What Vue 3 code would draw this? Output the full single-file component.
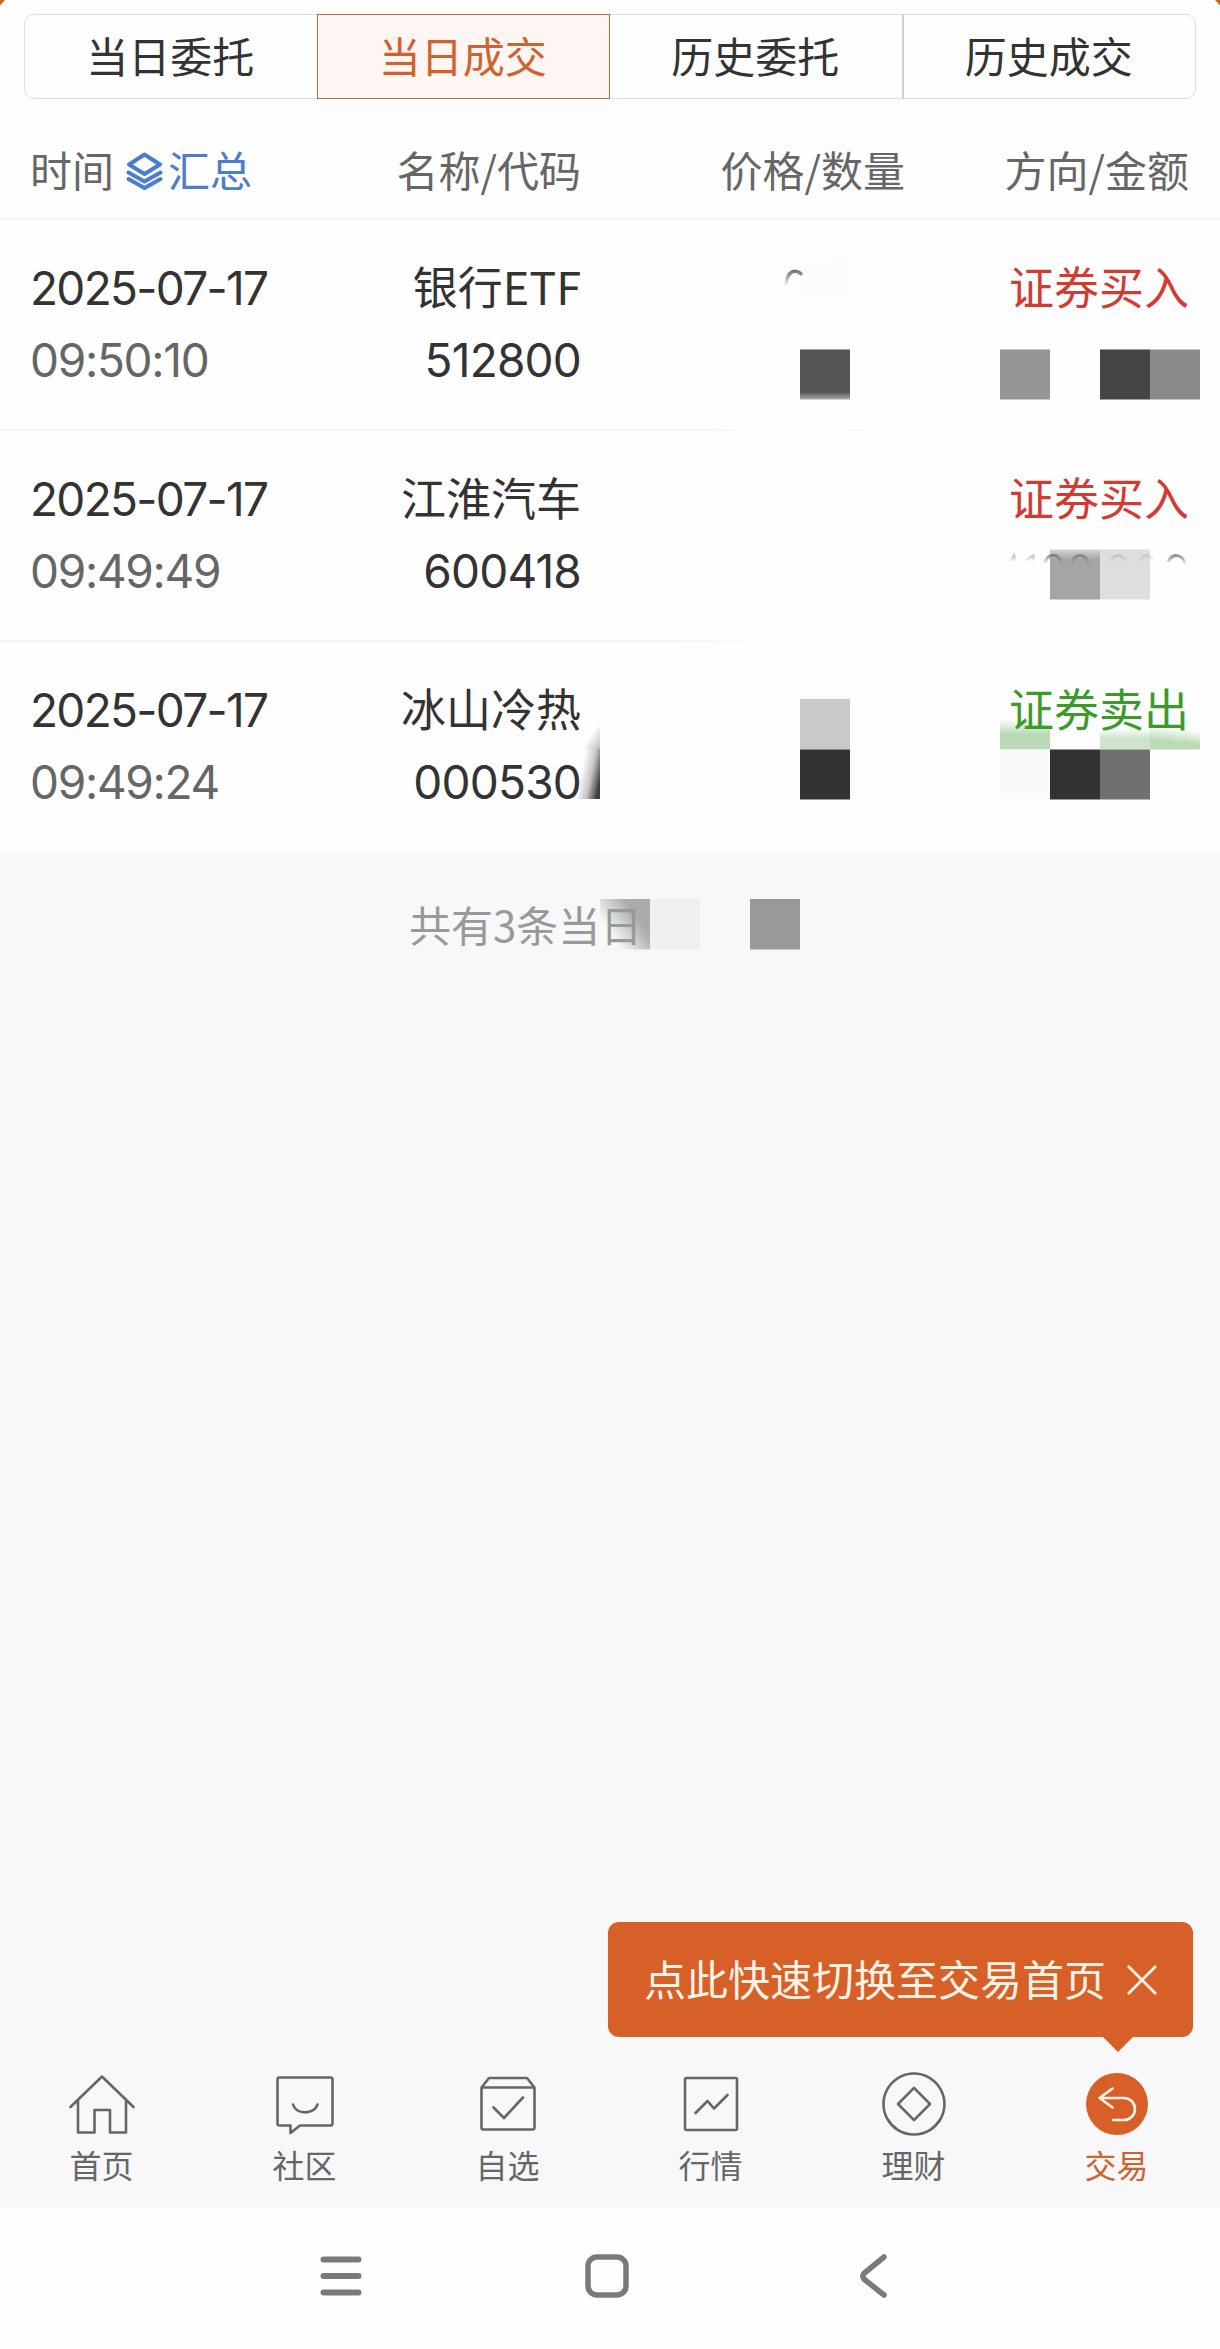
<template>
  <div class="page">
    <header class="top">
      <svg class="corners" viewBox="0 0 1220 6" width="1220" height="6">
        <path d="M0 0H5Q2 3 0 5.500Z M1220 0H1215Q1218 3 1220 5.500Z" fill="#d4602c" />
      </svg>
      <nav class="tabs">
        <button
          v-for="tab in tabs"
          :key="tab"
          class="tab"
          :class="{ active: tab === activeTab }"
          @click="activeTab = tab"
        >
          {{ tab }}
        </button>
      </nav>
    </header>

    <div class="columns head">
      <div class="time-head">
        <span>时间</span>
        <a class="summary-link">
          <svg width="37" height="38" viewBox="0 0 37 38">
            <g fill="none" stroke="#4a7dd0" stroke-width="4" stroke-linejoin="round" stroke-linecap="round">
              <path d="M18.500 2.500L34 12.500L18.500 22L3 12.500Z" />
              <path d="M2.500 20.500L18.500 29.500L34.500 20.500" />
              <path d="M2.500 27L18.500 36L34.500 27" />
            </g>
          </svg>
          <span>汇总</span>
        </a>
      </div>
      <span>名称/代码</span>
      <span>价格/数量</span>
      <span>方向/金额</span>
    </div>

    <section class="list">
      <!-- Maskerade belopp -->
      <svg class="mosaic" width="1220" height="631" viewBox="0 220 1220 631">
        <defs>
          <linearGradient id="fadeDown" x1="0" y1="0" x2="0" y2="1">
            <stop offset="0" stop-color="#777" />
            <stop offset="0.850" stop-color="#777" stop-opacity="0" />
          </linearGradient>
          <linearGradient id="darkEnd" x1="0" y1="0" x2="0" y2="1">
            <stop offset="0.850" stop-color="#555" />
            <stop offset="1" stop-color="#aaa" />
          </linearGradient>
          <linearGradient id="midTop" x1="0" y1="0" x2="0" y2="1">
            <stop offset="0" stop-color="#d4d4d4" />
            <stop offset="0.200" stop-color="#a5a5a5" />
          </linearGradient>
          <linearGradient id="wedge" x1="0.250" y1="0.350" x2="1" y2="0.650">
            <stop offset="0.100" stop-color="#444" stop-opacity="0" />
            <stop offset="0.550" stop-color="#444" stop-opacity="0.300" />
            <stop offset="1" stop-color="#333" stop-opacity="0.950" />
          </linearGradient>
          <linearGradient id="wedgeTop" x1="0" y1="0" x2="1" y2="1">
            <stop offset="0.500" stop-color="#777" stop-opacity="0" />
            <stop offset="1" stop-color="#777" stop-opacity="0.500" />
          </linearGradient>
          <linearGradient id="green" x1="0" y1="0" x2="0" y2="1">
            <stop offset="0" stop-color="#b9dab5" stop-opacity="0" />
            <stop offset="0.500" stop-color="#b9dab5" />
          </linearGradient>
          <linearGradient id="greenEnd" x1="0.550" y1="0" x2="0.350" y2="0.800">
            <stop offset="0" stop-color="#b9dab5" stop-opacity="0" />
            <stop offset="0.800" stop-color="#b9dab5" />
          </linearGradient>
        </defs>
        <path d="M800 268Q820 258 850 256V300H800Z" fill="#fcfcfc" />
        <path d="M786 289C786 268 797 269 802 275" fill="none" stroke="url(#fadeDown)" stroke-width="3.500" />
        <rect x="800" y="349.500" width="50" height="50" fill="url(#darkEnd)" />
        <rect x="1000" y="349.500" width="50" height="50" fill="#969696" />
        <rect x="1100" y="349.500" width="50" height="50" fill="#444" />
        <rect x="1150" y="349.500" width="50" height="50" fill="#8a8a8a" />

        <rect x="1050" y="549.500" width="50" height="50" fill="url(#midTop)" />
        <rect x="1100" y="549.500" width="50" height="50" fill="#dedede" />
        <g fill="none" stroke="url(#fadeDown)" stroke-width="3">
          <path d="M1009 563L1014 556L1016 563" opacity="0.400" />
          <path d="M1025 561L1033 556L1034 563" opacity="0.400" />
          <path d="M1044 566C1047 552 1058 552 1062 564" opacity="0.800" />
          <path d="M1071 566C1074 552 1086 552 1089 566" opacity="0.800" />
          <path d="M1110 564C1113 553 1123 553 1126 564" opacity="0.250" />
          <path d="M1139 564C1142 553 1151 553 1154 564" opacity="0.200" />
          <path d="M1168 562C1173 552 1184 554 1186 567" opacity="0.800" />
        </g>

        <rect x="800" y="699" width="50" height="50.500" fill="#c9c9c9" />
        <rect x="800" y="749.500" width="50" height="50" fill="#323232" />
        <rect x="582" y="722" width="18" height="27" fill="url(#wedgeTop)" />
        <rect x="573" y="749" width="27" height="50" fill="url(#wedge)" />
        <rect x="1000" y="719" width="50" height="30.500" fill="url(#green)" />
        <rect x="1100" y="728" width="50" height="21.500" fill="url(#green)" opacity="0.700" />
        <rect x="1150" y="728" width="50" height="21.500" fill="url(#greenEnd)" />
        <rect x="1000" y="749.500" width="50" height="50" fill="#fafafa" />
        <rect x="1050" y="749.500" width="50" height="50" fill="#323232" />
        <rect x="1100" y="749.500" width="50" height="50" fill="#707070" />
      </svg>

      <div v-for="(deal, i) in deals" :key="deal.code" class="columns row" :class="'row-' + i">
        <div class="cell left">
          <span class="num date">{{ deal.date }}</span>
          <span class="num time">{{ deal.time }}</span>
        </div>
        <div class="cell">
          <span class="cjk">{{ deal.name }}</span>
          <span class="num">{{ deal.code }}</span>
        </div>
        <div class="cell"></div>
        <div class="cell">
          <span class="cjk" :class="deal.side">{{ deal.side === 'buy' ? '证券买入' : '证券卖出' }}</span>
        </div>
      </div>
    </section>

    <section class="footer-note">
      <svg class="mosaic" width="1220" height="60" viewBox="0 894 1220 60">
        <defs>
          <linearGradient id="corner" x1="0" y1="0.650" x2="0.800" y2="0.100">
            <stop offset="0.150" stop-color="#a9acab" stop-opacity="0" />
            <stop offset="0.800" stop-color="#a9acab" />
          </linearGradient>
        </defs>
        <rect x="600" y="899" width="50" height="50.500" fill="url(#corner)" />
        <rect x="650" y="899" width="50" height="50.500" fill="#eff0f2" />
        <rect x="750" y="899" width="50" height="50.500" fill="#999" />
      </svg>
      <span class="note">共有3条当日</span>
    </section>

    <footer class="bottom">
      <div v-if="showTip" class="tip">
        <span>点此快速切换至交易首页</span>
        <svg width="32" height="32" viewBox="0 0 32 32" @click="showTip = false">
          <path d="M2 2L30 30M30 2L2 30" fill="none" stroke="#fff3e6" stroke-width="2.800" />
        </svg>
      </div>
      <div v-for="item in menu" :key="item.label" class="menu-item" :class="{ current: item.current }">
        <svg width="72" height="72" viewBox="0 0 72 72">
          <circle v-if="item.current" cx="36" cy="35" r="31" fill="#d75f28" />
          <path :d="item.icon" />
        </svg>
        <span>{{ item.label }}</span>
      </div>
    </footer>

    <div class="system-nav">
      <svg width="48" height="48" viewBox="0 0 48 48">
        <path d="M6.500 7.500H41.500M6.500 24H41.500M6.500 40.500H41.500" stroke-width="6" />
      </svg>
      <svg width="48" height="48" viewBox="0 0 48 48">
        <rect x="5" y="5" width="38" height="38" rx="9" stroke-width="5.500" />
      </svg>
      <svg width="48" height="48" viewBox="0 0 48 48">
        <path d="M35 5L15.500 21Q12 24 15.500 27.500L35 43" stroke-width="5.500" />
      </svg>
    </div>
  </div>
</template>

<script setup>
import { ref } from 'vue'

const tabs = ['当日委托', '当日成交', '历史委托', '历史成交']
const activeTab = ref('当日成交')
const showTip = ref(true)

const deals = [
  { date: '2025-07-17', time: '09:50:10', name: '银行ETF', code: '512800', side: 'buy' },
  { date: '2025-07-17', time: '09:49:49', name: '江淮汽车', code: '600418', side: 'buy' },
  { date: '2025-07-17', time: '09:49:24', name: '冰山冷热', code: '000530', side: 'sell' },
]

const menu = [
  {
    label: '首页',
    icon: 'M4.500 38L36 7.500L67.500 38M12 31V63.500H28.500V41H44V63.500H60V31',
  },
  {
    label: '社区',
    icon: 'M10.500 8.500H61.500Q63.500 8.500 63.500 10.500V54.500Q63.500 56.500 61.500 56.500H31L21.500 64V56.500H10.500Q8.500 56.500 8.500 54.500V10.500Q8.500 8.500 10.500 8.500M24 35.500C27 46 45 46 48.500 35.500',
  },
  {
    label: '自选',
    icon: 'M9.500 18.500L17 9H55L62.500 18.500V58.500Q62.500 60.500 60.500 60.500H11.500Q9.500 60.500 9.500 58.500V18.500H62.500M21.500 38.500L32 49L51 28.500',
  },
  {
    label: '行情',
    icon: 'M11.500 9H60.500Q62 9 62 10.500V59.500Q62 61 60.500 61H11.500Q10 61 10 59.500V10.500Q10 9 11.500 9M20.500 44L32.500 32L39 39.500L52.500 26',
  },
  {
    label: '理财',
    icon: 'M36 4.500A30.500 30.500 0 1 1 35.900 4.500M36 18.800L52 35L36 51.200L20 35Z',
  },
  {
    label: '交易',
    current: true,
    icon: 'M31.500 19.500L18.500 29L31.500 38.500M18.500 29H43A11 11 0 0 1 43 51H32',
  },
]
</script>

<style>
body {
  margin: 0;
}
</style>

<style scoped>
.page {
  width: 1220px;
  height: 2349px;
  display: flex;
  flex-direction: column;
  background: #f6f8fa;
  font-family: 'Noto Sans CJK SC', sans-serif;
  font-weight: 400;
  font-size: 42px;
  color: #333;
}

.top {
  position: relative;
  height: 121px;
  box-sizing: border-box;
  padding: 14px 24px 0;
  background: #fefefe;
}
.corners {
  position: absolute;
  top: 0;
  left: 0;
}

.tabs {
  display: flex;
  height: 85px;
  box-sizing: border-box;
  border: 1.500px solid #dcdfe0;
  border-radius: 10px;
}
.tab {
  flex: 1;
  margin: -1px 0;
  padding: 0 1px 4px 0;
  border: 0 solid #cfd1d3;
  background: none;
  font: inherit;
  color: inherit;
}
.tab:last-child {
  border-left-width: 2px;
}
.tab.active {
  border: 1.500px solid #b3703f;
  background: #fff6f3;
  color: #cf632d;
}

.columns {
  display: grid;
  grid-template-columns: 1fr 309px 324px 284px;
  padding: 0 31px 0 30px;
  box-sizing: border-box;
  text-align: right;
}
.head {
  height: 99px;
  padding-bottom: 4px;
  align-items: center;
  border-top: 2px solid #fafafa;
  border-bottom: 2px solid #f4f4f4;
  background: #fefefe;
  color: #666;
}
.time-head,
.summary-link {
  display: flex;
  align-items: center;
}
.summary-link {
  margin-left: 12px;
  gap: 5px;
  color: #4a7dd0;
}
.summary-link svg {
  margin-top: 4px;
}

.list {
  position: relative;
  height: 631px;
  background: #fefefe;
}
.mosaic {
  position: absolute;
  top: 0;
  left: 0;
}
.row {
  position: relative;
  height: 211px;
  padding-top: 32px;
  font-size: 45px;
  background: linear-gradient(90deg, #f4f4f4 56%, #fefefe 64%, #f9f9f9 70%, #fefefe 75%) bottom / 100% 2px no-repeat;
}
.row-1 {
  background-image: linear-gradient(90deg, #f4f4f4 54%, #fefefe 64%);
}
.row-2 {
  background: none;
}
.cell {
  display: flex;
  flex-direction: column;
  line-height: 72px;
  white-space: nowrap;
}
.cell.left {
  text-align: left;
}
.cjk {
  height: 72px;
  line-height: 68px;
}
.num {
  font-family: Inter, sans-serif;
  font-size: 46px;
  letter-spacing: -0.800px;
}
.date {
  letter-spacing: -1.700px;
}
.time {
  letter-spacing: -1.300px;
  color: #666;
}
.buy {
  color: #d33a31;
}
.sell {
  color: #3c9a28;
}

.footer-note {
  position: relative;
  flex: 1;
  padding: 42px 0 0 409px;
  line-height: 62px;
  color: #999;
}
.footer-note .mosaic {
  top: 43px;
}
.note {
  position: relative;
}

.bottom {
  position: relative;
  height: 167px;
  box-sizing: border-box;
  padding-right: 2px;
  display: flex;
  background: #f8f8fa;
}
.menu-item {
  flex: 1;
  display: flex;
  flex-direction: column;
  align-items: center;
  padding-top: 29px;
  font-size: 32px;
  line-height: 46px;
  color: #666;
}
.menu-item path {
  fill: none;
  stroke: #666;
  stroke-width: 2.600;
  stroke-linecap: round;
  stroke-linejoin: round;
}
.menu-item.current {
  color: #cf632d;
}
.menu-item.current path {
  stroke: #fff3e6;
}

.tip {
  position: absolute;
  right: 27px;
  bottom: 170px;
  width: 585px;
  height: 115px;
  box-sizing: border-box;
  padding: 0 35px 0 36px;
  display: flex;
  align-items: center;
  justify-content: space-between;
  border-radius: 11px;
  background: #d75f28;
  color: #fff3e6;
}
.tip span {
  padding-bottom: 4px;
}
.tip::after {
  content: '';
  position: absolute;
  top: 100%;
  right: 60px;
  border: 15px solid transparent;
  border-top-color: #d75f28;
  border-bottom: 0;
}

.system-nav {
  height: 142px;
  box-sizing: border-box;
  padding-bottom: 5px;
  display: flex;
  justify-content: center;
  align-items: center;
  gap: 218px;
  padding-right: 6px;
  background: #fefefe;
}
.system-nav svg {
  fill: none;
  stroke: #7a7a7a;
  stroke-linecap: round;
  stroke-linejoin: round;
}
</style>
